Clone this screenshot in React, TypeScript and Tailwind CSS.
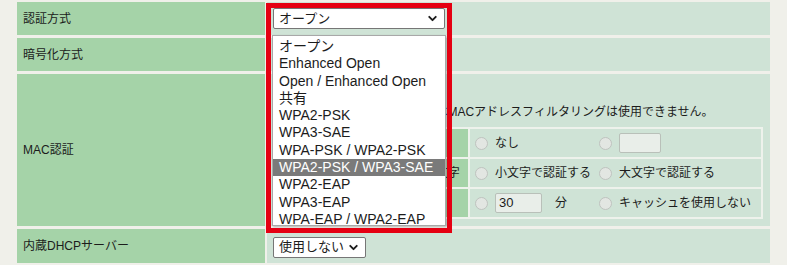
import { ChevronDown } from 'lucide-react'

const options = [
  'オープン',
  'Enhanced Open',
  'Open / Enhanced Open',
  '共有',
  'WPA2-PSK',
  'WPA3-SAE',
  'WPA-PSK / WPA2-PSK',
  'WPA2-PSK / WPA3-SAE',
  'WPA2-EAP',
  'WPA3-EAP',
  'WPA-EAP / WPA2-EAP',
]

function Radio() {
  return <span className="w-[13px] h-[13px] rounded-full border border-[#bfc3bf] bg-[#e2e6e2] shrink-0" />
}

function Label({ children }: { children: React.ReactNode }) {
  return <div className="w-[248px] shrink-0 bg-[#a5d3a8] flex items-center pl-[6px]">{children}</div>
}

export default function App() {
  return (
    <div className="relative w-[787px] h-[265px] overflow-hidden bg-[#f0f0ea] px-[17px] pt-[2px] text-[12px] text-[#1c1c1c] font-['Liberation_Sans','Noto_Sans_CJK_JP',sans-serif]">
      <div className="flex flex-col gap-[3px]">
        {/* 認証方式 */}
        <div className="flex gap-[2px] h-[33px]">
          <Label>認証方式</Label>
          <div className="flex-1 bg-[#cfe3d6] flex items-center pl-[6px]">
            <div className="w-[172px] h-[21px] bg-white border border-[#767676] rounded-[2px] flex items-center justify-between pl-[5px] pr-[5px] text-[13px]">
              <span>オープン</span>
              <ChevronDown size={13} strokeWidth={3.5} />
            </div>
          </div>
        </div>

        {/* 暗号化方式 */}
        <div className="flex gap-[2px] h-[33px]">
          <Label>暗号化方式</Label>
          <div className="flex-1 bg-[#cfe3d6]" />
        </div>

        {/* MAC認証 */}
        <div className="flex gap-[2px] h-[152px]">
          <Label>MAC認証</Label>
          <div className="flex-1 bg-[#cfe3d6] pl-[6px] pr-[7px] pt-[11px]">
            <p className="leading-[18px]">※認証方式がWPA系の場合、</p>
            <p className="leading-[18px]">WPA-EAP認証を使用する場合はMACアドレスフィルタリングは使用できません。</p>
            <div className="mt-[6px] bg-[#eef2ec] p-[2px] flex flex-col gap-[2px]">
              <div className="flex gap-[2px] h-[28px]">
                <div className="w-[193px] bg-[#a5d3a8] flex items-center pl-[8px]">MACアドレス登録</div>
                <div className="flex-1 bg-[#cfe3d6] flex items-center pl-[5px]">
                  <div className="w-[124px] flex items-center gap-[7px]">
                    <Radio />
                    <span>なし</span>
                  </div>
                  <div className="flex items-center gap-[7px]">
                    <Radio />
                    <span className="w-[42px] h-[20px] border border-[#b9c0b9] rounded-[2px] bg-[#e9eee9]" />
                  </div>
                </div>
              </div>
              <div className="flex gap-[2px] h-[28px]">
                <div className="w-[193px] bg-[#a5d3a8] flex items-center pl-[14px]">MACアドレス英字大文字小文字</div>
                <div className="flex-1 bg-[#cfe3d6] flex items-center pl-[5px]">
                  <div className="w-[124px] flex items-center gap-[7px]">
                    <Radio />
                    <span>小文字で認証する</span>
                  </div>
                  <div className="flex items-center gap-[7px]">
                    <Radio />
                    <span>大文字で認証する</span>
                  </div>
                </div>
              </div>
              <div className="flex gap-[2px] h-[28px]">
                <div className="w-[193px] bg-[#a5d3a8] flex items-center pl-[8px]">キャッシュ時間</div>
                <div className="flex-1 bg-[#cfe3d6] flex items-center pl-[5px]">
                  <div className="w-[124px] flex items-center gap-[7px]">
                    <Radio />
                    <span className="w-[47px] h-[20px] border border-[#b9c0b9] rounded-[2px] bg-[#e9eee9] flex items-center pl-[3px] text-[13px]">30</span>
                    <span className="ml-[6px]">分</span>
                  </div>
                  <div className="flex items-center gap-[7px]">
                    <Radio />
                    <span>キャッシュを使用しない</span>
                  </div>
                </div>
              </div>
            </div>
          </div>
        </div>

        {/* 内蔵DHCPサーバー */}
        <div className="flex gap-[2px] h-[34px]">
          <Label>内蔵DHCPサーバー</Label>
          <div className="flex-1 bg-[#cfe3d6] flex items-center pl-[6px] pt-[2px]">
            <div className="w-[93px] h-[21px] bg-white border border-[#767676] rounded-[2px] flex items-center justify-between pl-[5px] pr-[5px] text-[13px]">
              <span>使用しない</span>
              <ChevronDown size={13} strokeWidth={3.5} />
            </div>
          </div>
        </div>
      </div>

      {/* open dropdown list */}
      <div className="absolute left-[272px] top-[35px] w-[174px] h-[191px] bg-white border border-[#a8a8a8] shadow-[1px_1px_2px_rgba(0,0,0,0.25)] pt-[2px] text-[14px]">
        {options.map((o) => (
          <div
            key={o}
            className={
              o === 'WPA2-PSK / WPA3-SAE'
                ? 'h-[17.3px] leading-[17px] pl-[6px] bg-[#7a7a7a] text-white'
                : 'h-[17.3px] leading-[17px] pl-[6px]'
            }
          >
            {o}
          </div>
        ))}
      </div>

      {/* red highlight frame */}
      <div className="absolute left-[266px] top-[3px] w-[186px] h-[230px] border-[5px] border-[#e50012]" />
    </div>
  )
}
